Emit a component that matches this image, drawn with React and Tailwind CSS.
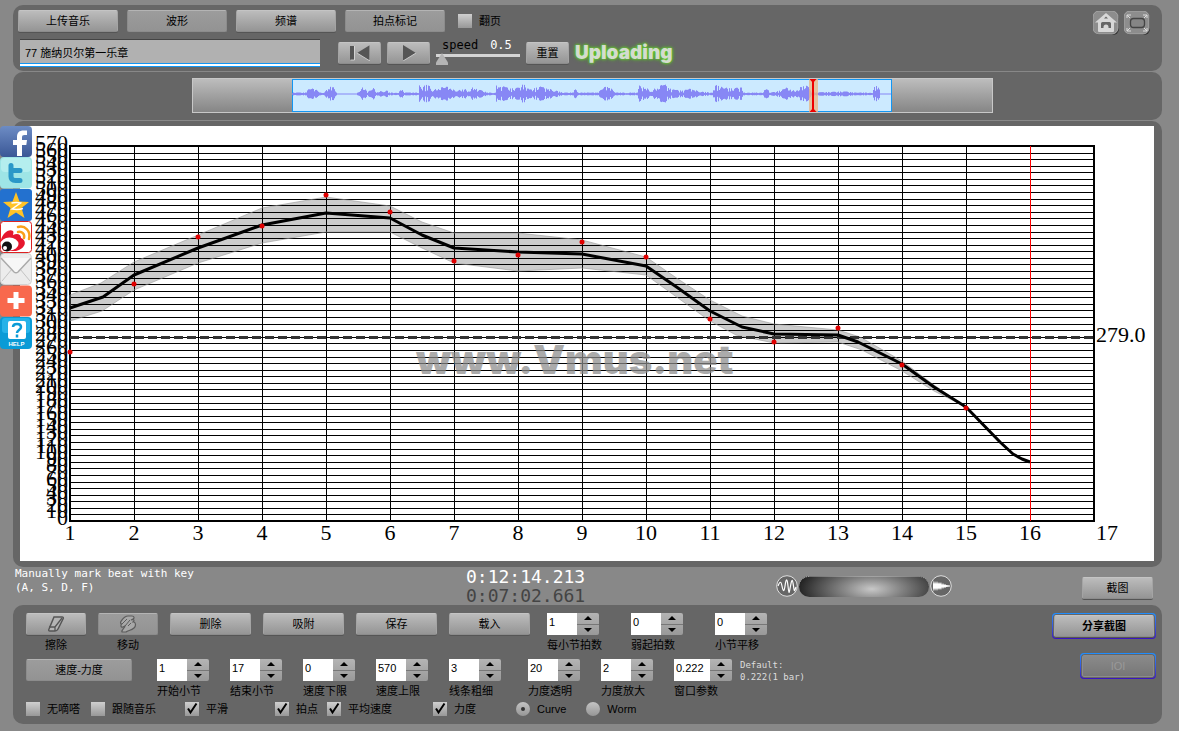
import React, { useState } from 'react';

const BEAT_WIDTH = 64;
const LEFT = 50;
const TOP = 20;
const BOTTOM = 395;
const MAX_TEMPO = 570;

const beatX = (beat) => LEFT + (beat - 1) * BEAT_WIDTH;
const tempoY = (v) => BOTTOM - (v / MAX_TEMPO) * (BOTTOM - TOP);

const tempos = Array.from({ length: MAX_TEMPO / 10 + 1 }, (_, i) => i * 10);
const beats = Array.from({ length: 16 }, (_, i) => i + 1);

const curve =
  '50,182 83,171 114,149 178,122 242,99 306,87 370,92 402,109 434,122 498,126 562,128 626,140 658,162 690,185 722,201 754,208 818,209 838,216 882,238 914,261 946,281 980,316 993,328 1002,333 1010,336';
const band =
  '50,169 81,157 114,136 178,109 242,82 306,71 370,80 402,96 434,107 498,107 562,114 626,131 658,153 690,174 722,190 754,198 818,204 840,211 882,235 914,259 946,281 ' +
  '914,265 882,245 842,224 818,216 754,217 716,209 690,195 658,172 626,149 562,142 498,145 434,137 402,122 370,106 306,106 242,117 178,137 114,164 82,185 50,195';
const dots = [226, 158, 111, 100, 69, 86, 135, 129, 116, 131, 193, 216, 202, 239, 282];

// [x, amplitude] pairs of the recording's envelope
const envelope = [
  [0, 1], [13, 1], [15, 4], [20, 5], [25, 4], [27, 1], [32, 2], [36, 5], [40, 9], [43, 2], [45, 0], [64, 0], [66, 2],
  [70, 6], [74, 4], [75, 1], [79, 5], [81, 6], [84, 1], [90, 3], [95, 3], [97, 1], [106, 1], [109, 5], [112, 1], [126, 1],
  [127, 13], [128, 10], [131, 8], [136, 9], [140, 4], [147, 5], [152, 8], [157, 6], [163, 3], [170, 4], [180, 6], [190, 3],
  [195, 1], [203, 1], [204, 8], [212, 7], [218, 5], [226, 6], [231, 10], [237, 4], [248, 7], [256, 5], [264, 3],
  [270, 1], [280, 1], [284, 6], [287, 1], [305, 1], [314, 8], [318, 6], [323, 1], [345, 1], [347, 8], [355, 5],
  [365, 5], [371, 11], [376, 6], [381, 4], [390, 3], [398, 5], [408, 2], [420, 1], [422, 10], [427, 7], [433, 6],
  [440, 5], [449, 7], [451, 1], [470, 1], [474, 6], [478, 1], [488, 3], [494, 6], [500, 3], [508, 7], [516, 8],
  [519, 1], [548, 2], [554, 2], [562, 1], [580, 1], [582, 7], [586, 8], [588, 0], [599, 0],
];

function amplitudeAt(x) {
  const i = Math.max(1, envelope.findIndex(([ex]) => ex >= x));
  const [x0, a0] = envelope[i - 1];
  const [x1, a1] = envelope[i];
  const a = a0 + ((a1 - a0) * (x - x0)) / (x1 - x0);
  return a * (0.25 + 0.75 * Math.abs(Math.sin(x * x * 1.7)));
}

const wavePath = Array.from({ length: 599 }, (_, x) => {
  const a = amplitudeAt(x);
  return `M${x + 0.5} ${14.5 - a}V${15.5 + a * 0.9}`;
}).join('');

const buttonLook =
  'rounded-xs border border-t-[#c4c4c4] border-x-[#a4a4a4] border-b-[#8c8c8c] shadow-[0_1px_0_#555] bg-linear-to-b from-[#bcbcbc] to-[#959595]';
const toggledLook =
  'rounded-xs border border-t-[#b4b4b4] border-x-[#8c8c8c] border-b-[#8c8c8c] bg-linear-to-b from-[#9c9c9c] to-[#939393]';

function Button({ className = '', on = false, children, ...rest }) {
  return (
    <button
      type="button"
      className={`flex h-[22px] items-center justify-center whitespace-nowrap ${on ? toggledLook : buttonLook} ${className}`}
      {...rest}
    >
      {children}
    </button>
  );
}

function CheckBox({ label, checked = false, className = '' }) {
  const [on, setOn] = useState(checked);
  return (
    <label className={`flex items-center gap-[7px] whitespace-nowrap ${className}`}>
      <span className="grid">
        <input
          type="checkbox"
          checked={on}
          onChange={(e) => setOn(e.target.checked)}
          className="col-start-1 row-start-1 size-3.5 appearance-none bg-linear-to-b from-[#cfcfcf] to-[#989898]"
        />
        {on && (
          <svg viewBox="0 0 14 14" className="pointer-events-none col-start-1 row-start-1 size-3.5 overflow-visible">
            <path d="M3 6.5 5.5 10.5 11.5 1.5" fill="none" stroke="#000" strokeWidth="2" />
          </svg>
        )}
      </span>
      {label}
    </label>
  );
}

function Radio({ label, checked, onChange }) {
  return (
    <label className="flex items-center gap-[7px]">
      <span className="grid place-items-center">
        <input
          type="radio"
          name="plot"
          checked={checked}
          onChange={onChange}
          className="col-start-1 row-start-1 size-3.5 appearance-none rounded-full bg-linear-to-b from-[#c4c4c4] to-[#969696]"
        />
        {checked && <span className="pointer-events-none col-start-1 row-start-1 size-1 rounded-full bg-[#333]" />}
      </span>
      {label}
    </label>
  );
}

function Stepper({ id, label, initial, step = 1, wide = false }) {
  const [value, setValue] = useState(initial);
  const change = (d) => setValue((v) => String(Number((Number(v) + d).toFixed(3))));
  return (
    <div className={wide ? 'w-[58px]' : 'w-[52px]'}>
      <div className="flex h-[22px]">
        <input
          id={id}
          type="text"
          inputMode="numeric"
          value={value}
          onChange={(e) => setValue(e.target.value)}
          className="min-w-0 flex-1 bg-white pb-1 pl-0.5"
        />
        <div className="flex w-[22px] flex-col divide-y divide-[#777] overflow-hidden rounded-r-xs bg-linear-to-b from-[#b4b4b4] to-[#999]">
          <button type="button" aria-label="+" onClick={() => change(step)} className="flex flex-1 items-center justify-center">
            <svg viewBox="0 0 8 4" className="h-1 w-2"><path d="M0 4 4 0 8 4z" /></svg>
          </button>
          <button type="button" aria-label="-" onClick={() => change(-step)} className="flex flex-1 items-center justify-center">
            <svg viewBox="0 0 8 4" className="h-1 w-2"><path d="M0 0 4 4 8 0z" /></svg>
          </button>
        </div>
      </div>
      <label htmlFor={id} className="mt-0.5 block leading-4 whitespace-nowrap">{label}</label>
    </div>
  );
}

function ShareBar() {
  return (
    <nav className="absolute top-[125px] left-0 flex flex-col">
      <a href="#facebook" aria-label="Facebook">
        <svg viewBox="0 0 32 32" className="size-8">
          <defs>
            <linearGradient id="fb" x1="0" y1="0" x2="0" y2="1">
              <stop offset="0" stopColor="#6d8cc4" />
              <stop offset="1" stopColor="#3a5796" />
            </linearGradient>
          </defs>
          <rect x="0" y="1" width="32" height="31" rx="4" fill="url(#fb)" />
          <path d="M17 31V20h-4v-5h4v-3c0-4.500 2.500-6.500 6.500-6.500H27V10h-2.500c-2 0-2.500 .8-2.500 2.500V15h5l-.7 5H22v11z" fill="#fff" />
        </svg>
      </a>
      <a href="#twitter" aria-label="Twitter">
        <svg viewBox="0 0 32 32" className="size-8">
          <rect width="32" height="31.500" rx="4" fill="#9ee5e6" />
          <rect x="1" y="1" width="30" height="14" rx="4" fill="#b4eeee" />
          <path d="M11 8.500v11c0 3 2 4 4.500 4H20M11 13.500h9" fill="none" stroke="#2a98c8" strokeWidth="5" strokeLinecap="round" />
        </svg>
      </a>
      <a href="#qzone" aria-label="Qzone">
        <svg viewBox="0 0 32 32" className="size-8">
          <rect width="32" height="32" rx="3" fill="#2371cf" />
          <path d="M16 3 19.500 12.500 29 13 21.500 19 24.500 29 16 23.500 7.500 29 10.500 19 3 13 12.500 12.500z" fill="#ffc327" />
          <path d="M11.500 14q5-1 9 0L12 20q6 1 11-.5" fill="none" stroke="#fff" strokeWidth="1.500" />
        </svg>
      </a>
      <a href="#weibo" aria-label="Weibo">
        <svg viewBox="0 0 32 32" className="size-8">
          <rect x=".5" y=".5" width="31" height="31" rx="3" fill="#fff" stroke="#d22" />
          <path d="M1 19C2 13 9 7 13 10c1 1 0 3 0 4 4-2 8-1 8 3 7 3 4 11-5 13H4c-2-1-3-4-3-11z" fill="#e6162d" />
          <ellipse cx="9.500" cy="23" rx="9" ry="6.500" fill="#fff" />
          <circle cx="7" cy="25.500" r="5" fill="#111" />
          <circle cx="5" cy="27" r="2" fill="#fff" />
          <path d="M18 6c7-2 13 4 11 12M18 11c4-1 7 2 6 6" fill="none" stroke="#f9a01b" strokeWidth="2.500" strokeLinecap="round" />
        </svg>
      </a>
      <a href="#mail" aria-label="Mail">
        <svg viewBox="0 0 32 32" className="size-8">
          <rect x=".5" y=".5" width="31" height="31" rx="4" fill="#ececec" stroke="#d2d2d2" />
          <path d="M2 28 12 16M30 28 20 16" stroke="#c4c4c4" />
          <path d="M1 5 14 19q2 1.500 4 0L31 5" fill="#f7f7f7" stroke="#aaa" strokeWidth="1.500" />
        </svg>
      </a>
      <a href="#more" aria-label="More">
        <svg viewBox="0 0 32 32" className="size-8">
          <rect y=".5" width="32" height="31" rx="4" fill="#f8694d" />
          <path d="M16 7v17M7.500 15.500h17" stroke="#fff" strokeWidth="5" />
        </svg>
      </a>
      <a href="#help" aria-label="Help">
        <svg viewBox="0 0 32 32" className="size-8">
          <rect width="32" height="32" rx="4" fill="#0a9bd6" />
          <rect x="2" y="1" width="28" height="15" rx="3" fill="#25b2e8" />
          <rect x="8" y="4" width="18" height="18" rx="2" fill="#fff" />
          <path d="M13 10c0-4 8-4 8 0 0 3-4 3-4 6M17 17.500v3" fill="none" stroke="#0a9bd6" strokeWidth="2.500" />
          <text x="16.500" y="29" textAnchor="middle" fontFamily="Liberation Sans, sans-serif" fontWeight="700" fontSize="6" fill="#fff">HELP</text>
        </svg>
      </a>
    </nav>
  );
}

function Overview() {
  return (
    <div className="mr-[169px] ml-[179px] h-[35px] border border-[#c8c8c8] bg-linear-to-b from-[#bdbdbd] to-[#868686] pr-[100px] pl-[99px]">
      <svg viewBox="0 0 600 33" preserveAspectRatio="none" className="h-full w-full">
        <rect x=".5" y=".5" width="599" height="32" fill="#cceaff" stroke="#1296f3" />
        <path d={wavePath} stroke="#8787f5" />
        <rect x="517" y="0" width="9" height="33" fill="#e8b98a" fillOpacity=".8" />
        <path d="M521 0v33" stroke="#e00" strokeWidth="2" />
        <path d="M517.500 0h7l-3.500 4zM517.500 33h7l-3.500-4z" fill="#e00" />
      </svg>
    </div>
  );
}

function TempoChart() {
  return (
    <svg viewBox="0 0 1134 435" className="block h-auto w-full bg-white font-['Liberation_Serif',serif] text-[22px]">
      <g stroke="#000" shapeRendering="crispEdges">
        {tempos.map((v) => (
          <path key={v} d={`M${LEFT} ${Math.round(tempoY(v)) + 0.5}H1074`} />
        ))}
        {beats.map((b) => (
          <path key={b} d={`M${beatX(b) + 0.5} ${TOP}V${BOTTOM}`} />
        ))}
        <path d="M50 20H1074V395H50z" fill="none" strokeWidth="2" />
      </g>
      <polygon points={band} fill="#000" fillOpacity=".2" stroke="#999" strokeOpacity=".6" />
      <path d="M50 211.500H1074" stroke="#333" strokeWidth="3" strokeDasharray="9 4" />
      <text
        x="396"
        y="248"
        fontSize="40"
        fontWeight="900"
        fill="#8c8c8c"
        opacity=".72"
        className="font-[Inter,sans-serif]"
      >
        www.Vmus.net
      </text>
      <polyline points={curve} fill="none" stroke="#000" strokeWidth="3" strokeLinejoin="round" />
      <path d="M1010.500 20V395" stroke="#f00" shapeRendering="crispEdges" />
      {dots.map((y, i) => (
        <circle key={i} cx={beatX(i + 1)} cy={y} r="2.500" fill="#e00000" />
      ))}
      {tempos.map((v) => (
        <text key={v} x="48" y={tempoY(v) + 4} textAnchor="end">{v}</text>
      ))}
      {beats.map((b) => (
        <text key={b} x={beatX(b)} y="414" textAnchor="middle">{b}</text>
      ))}
      <text x="1076" y="414">17</text>
      <text x="1076" y="216">279.0</text>
    </svg>
  );
}

const panel = 'rounded-[10px] bg-[#666]';

export default function App() {
  const [title, setTitle] = useState('77 施纳贝尔第一乐章');
  const [plot, setPlot] = useState('Curve');

  return (
    <div className="relative flex min-h-screen flex-col bg-[#888] pt-[5px] pr-[17px] pb-[7px] pl-[13px] font-['Liberation_Sans','Noto_Sans_CJK_SC',sans-serif] text-[11px] leading-4 text-black">
      {/* Top bar */}
      <header className={`flex items-start justify-between px-[5px] pt-[5px] pb-1 ${panel}`}>
        <div>
          <div className="flex items-center gap-[9px]">
            <Button className="w-[100px]">上传音乐</Button>
            <Button className="w-[100px]" on>波形</Button>
            <Button className="w-[100px]">频谱</Button>
            <Button className="w-[100px]" on>拍点标记</Button>
            <CheckBox label="翻页" className="ml-1" />
          </div>
          <div className="mt-[7px] flex h-7 items-center gap-1.5 pl-0.5">
            <input
              aria-label="title"
              value={title}
              onChange={(e) => setTitle(e.target.value)}
              className="mr-3 h-7 w-[300px] border-t border-[#444] bg-[#b1b1b1] px-[5px] pb-1 shadow-[inset_0_-1px_#1296f3,inset_0_-3px_#fff,inset_0_-4px_#1296f3]"
            />
            <Button className="w-[43px]" aria-label="rewind">
              <svg viewBox="0 0 20 16" className="h-4 w-5">
                <path d="M0 1h4v14H0zM20 0 7 8l13 8z" fill="#555" />
                <path d="M4.500 1v14H.5M7 8l13 8V0" fill="none" stroke="#ddd" strokeWidth=".8" />
              </svg>
            </Button>
            <Button className="w-[43px]" aria-label="play">
              <svg viewBox="0 0 14 16" className="h-4 w-3.5">
                <path d="M1 0 14 8 1 16z" fill="#555" />
                <path d="M1 16 14 8" stroke="#ddd" strokeWidth=".8" />
              </svg>
            </Button>
            <div className="flex h-7 w-[84px] flex-col font-['DejaVu_Sans_Mono',monospace] text-xs">
              <div className="flex gap-3 pl-1.5 leading-3">
                <label htmlFor="speed">speed</label>
                <output htmlFor="speed" className="text-white">0.5</output>
              </div>
              <input
                id="speed"
                type="range"
                min="0.5"
                max="2"
                step="0.1"
                defaultValue="0.5"
                className="mt-[3px] h-[3px] w-full appearance-none bg-[#d4d4d4] [&::-webkit-slider-thumb]:mt-[7px] [&::-webkit-slider-thumb]:h-3 [&::-webkit-slider-thumb]:w-3 [&::-webkit-slider-thumb]:appearance-none [&::-webkit-slider-thumb]:bg-[#b4b4b4] [&::-webkit-slider-thumb]:[clip-path:polygon(50%_0,100%_80%,100%_100%,0_100%,0_80%)]"
              />
            </div>
            <Button className="w-[43px]">重置</Button>
            <span className="font-[Inter,sans-serif] text-[19px] font-black text-[#d4dccf] [text-shadow:0_0_2px_#6c3,0_0_3px_#6c3,0_0_4px_#5b2]">
              Uploading
            </span>
          </div>
        </div>
        <div className="flex gap-[5px] pt-px pr-[7px]">
          <button type="button" aria-label="home">
            <svg viewBox="0 0 26 24" className="h-6 w-[26px]">
              <rect x="1" y="2" width="25" height="22" rx="6" fill="#333" />
              <rect x="0" y="0" width="25" height="23" rx="6" fill="#8d8d8d" stroke="#a8a8a8" />
              <path d="M2 11.500 13 2l11 9.500h-3V20q0 1-1 1H6q-1 0-1-1v-8.500z" fill="#d8d8d8" />
              <path d="M8 17v-4.500q0-1.500 1.500-1.500h7q1.500 0 1.500 1.500V17h-2.500v-1q0-2.500-2.500-2.500T10.500 16v1zM11 7.500l2-2 2 2z" fill="#666" />
            </svg>
          </button>
          <button type="button" aria-label="fullscreen">
            <svg viewBox="0 0 26 24" className="h-6 w-[26px]">
              <rect x="1" y="2" width="25" height="22" rx="6" fill="#333" />
              <rect x="0" y="0" width="25" height="23" rx="6" fill="#8d8d8d" stroke="#a8a8a8" />
              <rect x="6.500" y="7.500" width="14" height="9" rx="3" fill="#858585" stroke="#444" strokeWidth="1.300" />
              <path d="M3 7V4h4M19 4h4v3M23 17v3h-4M7 20H3v-3M3 20l3-3M23 20l-3-3M23 4l-3 3M3 4l3 3" fill="none" stroke="#ddd" />
            </svg>
          </button>
        </div>
      </header>

      {/* Recording overview */}
      <section className={`mt-px pt-1.5 pb-[7px] ${panel}`}>
        <Overview />
      </section>

      {/* Tempo curve */}
      <main className={`mt-px pt-[5px] pr-2 pb-1.5 pl-[7px] ${panel}`}>
        <TempoChart />
      </main>

      {/* Clock and zoom */}
      <div className="flex h-[38px] items-start pl-0.5 font-['DejaVu_Sans_Mono',monospace] text-white">
        <p className="w-[451px] leading-3.5">
          Manually mark beat with key
          <br />
          (A, S, D, F)
        </p>
        <div className="w-[310px] text-lg leading-[19px]">
          <div>0:12:14.213</div>
          <div className="text-[#444]">0:07:02.661</div>
        </div>
        <div className="flex items-center pt-2">
          <svg viewBox="0 0 22 22" className="size-[22px]">
            <circle cx="11" cy="11" r="10.300" fill="#666" stroke="#ddd" />
            <path d="M2 11c2-5 3-5 4 0s2 7 3 0 2-9 3 0 1 8 2.500 0 2-7 3 0 1 5 2.500 1" fill="none" stroke="#fff" strokeWidth="1.200" />
          </svg>
          <input
            type="range"
            aria-label="zoom"
            className="mx-px h-[21px] w-[130px] appearance-none rounded-full border-t border-dotted border-[#aaa] bg-[radial-gradient(76px_30px_at_56%_60%,#c8c8c8_0%,#8a8a8a_35%,#484848_75%,#1c1c1c_100%)] [&::-webkit-slider-thumb]:appearance-none"
          />
          <svg viewBox="0 0 22 22" className="size-[22px]">
            <circle cx="11" cy="11" r="10.300" fill="#666" stroke="#ddd" />
            <path d="M3 5 4 9 5 6 6 9 7 6 8 9 9 7 10 9 11 7 12 10 13 8 14 10 15 9 16 10 20 10.500V11.500L16 12 15 13 14 12 13 14 12 12 11 15 10 13 9 15 8 13 7 16 6 13 5 16 4 13 3 17z" fill="#fff" />
          </svg>
        </div>
        <div className="mt-2.5 mr-[9px] ml-auto font-['Liberation_Sans','Noto_Sans_CJK_SC',sans-serif] text-black">
          <Button className="w-[71px]">截图</Button>
        </div>
      </div>

      {/* Editing controls */}
      <footer className={`flex justify-between pt-2 pr-1.5 pb-[7px] pl-[13px] ${panel}`}>
        <div>
          <div className="flex gap-3">
            <div className="flex flex-col items-center gap-0.5">
              <Button className="w-[60px]" id="erase">
                <svg viewBox="0 0 18 16" className="h-4 w-[18px]">
                  <path d="M7 1h8q2 0 1 2l-5 10q-1 2-3 2H3q-2 0-1-2z" fill="#b4b4b4" stroke="#555" strokeWidth="1.500" />
                  <path d="M2 11h6l7-9M8 11v4" fill="none" stroke="#555" strokeWidth="1.300" />
                </svg>
              </Button>
              <label htmlFor="erase">擦除</label>
            </div>
            <div className="flex flex-col items-center gap-0.5">
              <Button className="w-[60px]" id="move" on>
                <svg viewBox="0 0 18 18" className="h-[18px] w-[18px]">
                  <path
                    d="M3 17c-1-2 3-4 3-6l-2 1c-2 1-3-2-1-3-2 0-2-2 0-4 1-2 4-4 6-4h4c2 0 3 2 1 3l-2 1c3-1 4 0 2 2h1c2 1 2 4 0 6-3 3-6 2-8 4z"
                    fill="#a8a8a8"
                    stroke="#5c5c5c"
                    strokeWidth="1.200"
                  />
                  <path d="M3 9 8 4M6 11 11 5M9 11l3-3" fill="none" stroke="#5c5c5c" />
                </svg>
              </Button>
              <label htmlFor="move">移动</label>
            </div>
            <Button className="w-[81px]">删除</Button>
            <Button className="w-[81px]">吸附</Button>
            <Button className="w-[81px]">保存</Button>
            <Button className="w-[81px]">载入</Button>
            <div className="ml-[5px] flex gap-8">
              <Stepper id="beats" label="每小节拍数" initial="1" />
              <Stepper id="upbeat" label="弱起拍数" initial="0" />
              <Stepper id="shift" label="小节平移" initial="0" />
            </div>
          </div>

          <div className="mt-1.5 flex gap-[25px]">
            <Button className="w-[106px]" on>速度-力度</Button>
            <div className="flex gap-[21px]">
              <Stepper id="from" label="开始小节" initial="1" />
              <Stepper id="to" label="结束小节" initial="17" />
              <Stepper id="low" label="速度下限" initial="0" />
              <Stepper id="high" label="速度上限" initial="570" />
              <Stepper id="line" label="线条粗细" initial="3" />
            </div>
            <div className="ml-0.5 flex gap-[21px]">
              <Stepper id="alpha" label="力度透明" initial="20" />
              <Stepper id="gain" label="力度放大" initial="2" />
              <div className="flex gap-2">
                <Stepper id="window" label="窗口参数" initial="0.222" step={0.001} wide />
                <p className="font-['DejaVu_Sans_Mono',monospace] text-[9px] leading-3 text-[#ddd]">
                  Default:
                  <br />
                  0.222(1 bar)
                </p>
              </div>
            </div>
          </div>

          <div className="mt-0.5 flex items-center">
            <CheckBox label="无嘀嗒" className="w-[65px]" />
            <CheckBox label="跟随音乐" className="w-[94px]" />
            <CheckBox label="平滑" className="w-[90px]" checked />
            <CheckBox label="拍点" className="w-[52px]" checked />
            <CheckBox label="平均速度" className="w-[106px]" checked />
            <CheckBox label="力度" className="w-[83px]" checked />
            <div className="flex gap-5">
              <Radio label="Curve" checked={plot === 'Curve'} onChange={() => setPlot('Curve')} />
              <Radio label="Worm" checked={plot === 'Worm'} onChange={() => setPlot('Worm')} />
            </div>
          </div>
        </div>

        <div className="flex flex-col items-end gap-3.5">
          <div className="rounded-sm bg-linear-to-b from-[#1e8fff] to-[#3a10c0] p-px">
            <div className="rounded-sm bg-[#666] p-px">
              <Button className="w-[100px] font-bold">分享截图</Button>
            </div>
          </div>
          <div className="rounded-sm bg-linear-to-b from-[#1e8fff] to-[#3a10c0] p-px">
            <div className="rounded-sm bg-[#666] p-px">
              <button
                type="button"
                disabled
                className="block h-[22px] w-[72px] rounded-xs border border-[#8c8c8c] bg-linear-to-b from-[#8a8a8a] to-[#777] text-[#999]"
              >
                IOI
              </button>
            </div>
          </div>
        </div>
      </footer>

      <ShareBar />
    </div>
  );
}
